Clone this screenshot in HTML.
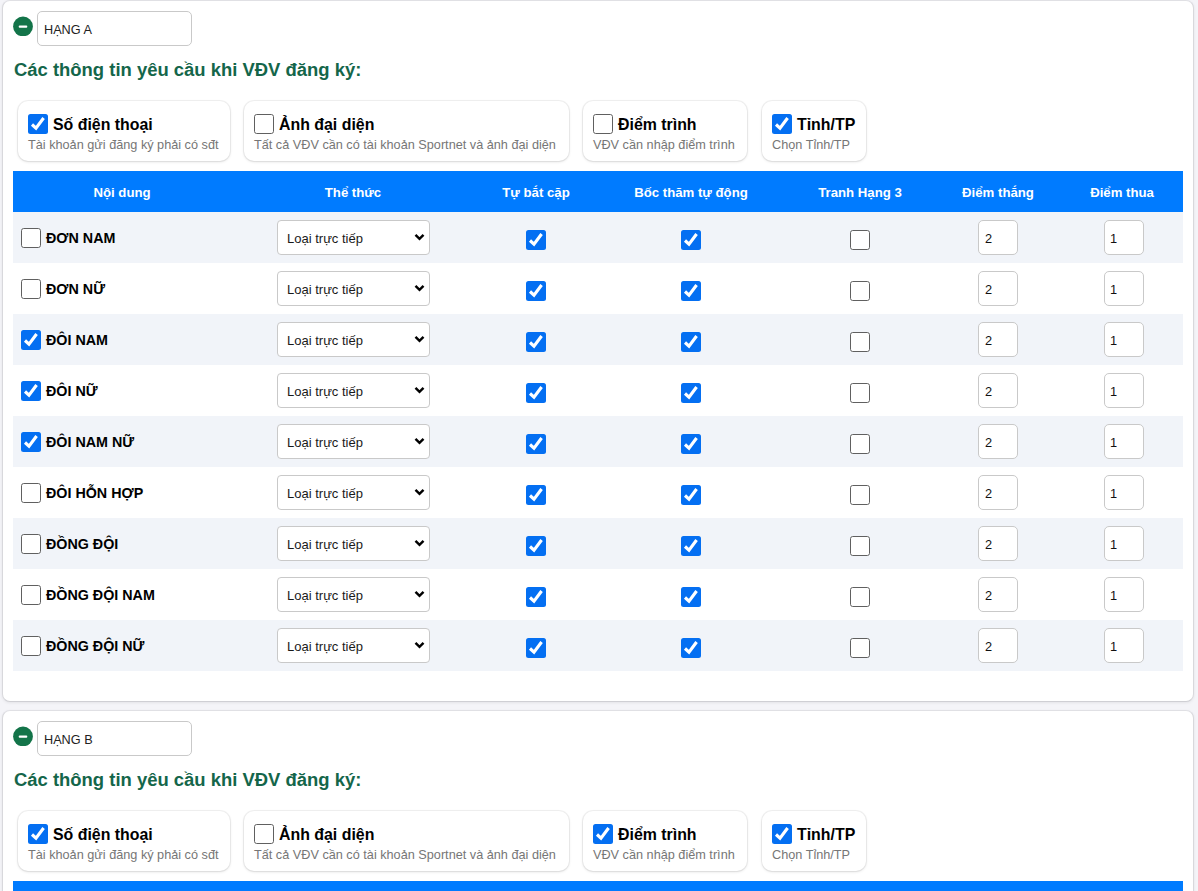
<!DOCTYPE html>
<html><head><meta charset="utf-8"><title>Hang</title><style>
*{box-sizing:border-box;margin:0;padding:0}
html,body{width:1198px;height:891px;overflow:hidden;background:#f4f4f8;font-family:"Liberation Sans", sans-serif}
.card{position:absolute;left:2px;width:1192px;background:#fff;border:1px solid #d8d8dc;border-top-color:#e0e0e4;border-bottom-color:#cfcfd4;border-radius:8px;box-shadow:0 1px 3px rgba(0,0,0,.07)}
.minus,.cb,.inp,.ocard,.thead,.th,.rowbg,.sel,.chev,.itxt,.head,.otitle,.osub,.rlabel,.stxt,.ntxt{position:absolute}
.cb{width:20px;height:20px}
.cb svg,.minus svg{display:block}
.inp,.sel{background:#fff;border:1px solid #c9c9c9;border-radius:5px}
.sel{border-radius:4px}
.itxt{color:#222;white-space:nowrap}
.head{color:#14664a;font-weight:bold;font-size:18.45px;line-height:30px;white-space:nowrap}
.ocard{background:#fff;border-radius:10px;box-shadow:0 0 0 1px rgba(0,0,0,.05),0 1px 3px rgba(0,0,0,.12)}
.otitle{font-weight:bold;font-size:15.9px;line-height:24px;color:#000;white-space:nowrap}
.osub{font-size:12.7px;line-height:18px;color:#767676;white-space:nowrap}
.thead{background:#007bff}
.th{height:41px;line-height:41px;text-align:center;color:#fff;font-weight:bold;font-size:13.2px;white-space:nowrap}
.rowbg{background:#f1f4f9}
.rlabel{font-weight:bold;font-size:14.3px;line-height:51px;color:#000;white-space:nowrap}
.stxt{font-size:13px;line-height:35px;color:#1a1a1a;white-space:nowrap}
.ntxt{font-size:12.8px;line-height:35px;color:#111;white-space:nowrap}
</style></head><body>
<div class="card" style="top:0px;height:702px"></div>
<div class="card" style="top:710px;height:400px"></div>
<div class="minus" style="left:13px;top:16px"><svg width="20" height="20" viewBox="0 0 20 20"><circle cx="10" cy="10.4" r="9.9" fill="#137449"/><rect x="5.7" y="9.4" width="8.6" height="2.4" rx="1" fill="#fff"/></svg></div>
<div class="inp" style="left:37px;top:11px;width:155px;height:35px"></div>
<div class="itxt" style="left:44px;top:13px;line-height:35px;font-size:12.7px">HẠNG A</div>
<div class="head" style="left:14px;top:55px;">Các thông tin yêu cầu khi VĐV đăng ký:</div>
<div class="ocard" style="left:18px;top:101px;width:212px;height:60px"></div>
<div class="cb" style="left:28px;top:114px"><svg width="20" height="20" viewBox="0 0 20 20"><rect x="0" y="0" width="20" height="20" rx="2.5" fill="#046ff2"/><path d="M4.0 10.5 L8.0 14.2 L15.6 4.0" fill="none" stroke="#fff" stroke-width="3.1" stroke-linecap="butt" stroke-linejoin="miter"/></svg></div>
<div class="otitle" style="left:53px;top:113px;">Số điện thoại</div>
<div class="osub" style="left:28px;top:136px;">Tài khoản gửi đăng ký phải có sđt</div>
<div class="ocard" style="left:244px;top:101px;width:325px;height:60px"></div>
<div class="cb" style="left:254px;top:114px"><svg width="20" height="20" viewBox="0 0 20 20"><rect x="0.5" y="0.5" width="19" height="19" rx="2.2" fill="#fff" stroke="#606060" stroke-width="1"/></svg></div>
<div class="otitle" style="left:279px;top:113px;">Ảnh đại diện</div>
<div class="osub" style="left:254px;top:136px;">Tất cả VĐV cần có tài khoản Sportnet và ảnh đại diện</div>
<div class="ocard" style="left:583px;top:101px;width:164px;height:60px"></div>
<div class="cb" style="left:593px;top:114px"><svg width="20" height="20" viewBox="0 0 20 20"><rect x="0.5" y="0.5" width="19" height="19" rx="2.2" fill="#fff" stroke="#606060" stroke-width="1"/></svg></div>
<div class="otitle" style="left:618px;top:113px;">Điểm trình</div>
<div class="osub" style="left:593px;top:136px;">VĐV cần nhập điểm trình</div>
<div class="ocard" style="left:762px;top:101px;width:104px;height:60px"></div>
<div class="cb" style="left:772px;top:114px"><svg width="20" height="20" viewBox="0 0 20 20"><rect x="0" y="0" width="20" height="20" rx="2.5" fill="#046ff2"/><path d="M4.0 10.5 L8.0 14.2 L15.6 4.0" fill="none" stroke="#fff" stroke-width="3.1" stroke-linecap="butt" stroke-linejoin="miter"/></svg></div>
<div class="otitle" style="left:797px;top:113px;">Tỉnh/TP</div>
<div class="osub" style="left:772px;top:136px;">Chọn Tỉnh/TP</div>
<div class="thead" style="left:13px;top:171px;width:1170px;height:41px"></div>
<div class="th" style="left:13px;top:172px;width:218px">Nội dung</div>
<div class="th" style="left:231px;top:172px;width:244px">Thể thức</div>
<div class="th" style="left:475px;top:172px;width:122px">Tự bắt cặp</div>
<div class="th" style="left:597px;top:172px;width:188px">Bốc thăm tự động</div>
<div class="th" style="left:785px;top:172px;width:150px">Tranh Hạng 3</div>
<div class="th" style="left:935px;top:172px;width:126px">Điểm thắng</div>
<div class="th" style="left:1061px;top:172px;width:122px">Điểm thua</div>
<div class="rowbg" style="left:13px;top:212px;width:1170px;height:51px"></div>
<div class="cb" style="left:21px;top:228px"><svg width="20" height="20" viewBox="0 0 20 20"><rect x="0.5" y="0.5" width="19" height="19" rx="2.2" fill="#fff" stroke="#606060" stroke-width="1"/></svg></div>
<div class="rlabel" style="left:46px;top:213px;">ĐƠN NAM</div>
<div class="sel" style="left:277px;top:220px;width:153px;height:35px"></div>
<div class="stxt" style="left:287px;top:221px;">Loại trực tiếp</div>
<svg class="chev" style="left:414px;top:233px" width="12" height="8" viewBox="0 0 12 8"><path d="M1.5 1.9 L5.5 5.8 L9.5 1.9" fill="none" stroke="#000" stroke-width="2.5"/></svg>
<div class="cb" style="left:526px;top:230px"><svg width="20" height="20" viewBox="0 0 20 20"><rect x="0" y="0" width="20" height="20" rx="2.5" fill="#046ff2"/><path d="M4.0 10.5 L8.0 14.2 L15.6 4.0" fill="none" stroke="#fff" stroke-width="3.1" stroke-linecap="butt" stroke-linejoin="miter"/></svg></div>
<div class="cb" style="left:681px;top:230px"><svg width="20" height="20" viewBox="0 0 20 20"><rect x="0" y="0" width="20" height="20" rx="2.5" fill="#046ff2"/><path d="M4.0 10.5 L8.0 14.2 L15.6 4.0" fill="none" stroke="#fff" stroke-width="3.1" stroke-linecap="butt" stroke-linejoin="miter"/></svg></div>
<div class="cb" style="left:850px;top:230px"><svg width="20" height="20" viewBox="0 0 20 20"><rect x="0.5" y="0.5" width="19" height="19" rx="2.2" fill="#fff" stroke="#606060" stroke-width="1"/></svg></div>
<div class="inp" style="left:978px;top:220px;width:40px;height:35px"></div>
<div class="ntxt" style="left:985px;top:221px;">2</div>
<div class="inp" style="left:1104px;top:220px;width:40px;height:35px"></div>
<div class="ntxt" style="left:1110px;top:221px;">1</div>
<div class="cb" style="left:21px;top:279px"><svg width="20" height="20" viewBox="0 0 20 20"><rect x="0.5" y="0.5" width="19" height="19" rx="2.2" fill="#fff" stroke="#606060" stroke-width="1"/></svg></div>
<div class="rlabel" style="left:46px;top:264px;">ĐƠN NỮ</div>
<div class="sel" style="left:277px;top:271px;width:153px;height:35px"></div>
<div class="stxt" style="left:287px;top:272px;">Loại trực tiếp</div>
<svg class="chev" style="left:414px;top:284px" width="12" height="8" viewBox="0 0 12 8"><path d="M1.5 1.9 L5.5 5.8 L9.5 1.9" fill="none" stroke="#000" stroke-width="2.5"/></svg>
<div class="cb" style="left:526px;top:281px"><svg width="20" height="20" viewBox="0 0 20 20"><rect x="0" y="0" width="20" height="20" rx="2.5" fill="#046ff2"/><path d="M4.0 10.5 L8.0 14.2 L15.6 4.0" fill="none" stroke="#fff" stroke-width="3.1" stroke-linecap="butt" stroke-linejoin="miter"/></svg></div>
<div class="cb" style="left:681px;top:281px"><svg width="20" height="20" viewBox="0 0 20 20"><rect x="0" y="0" width="20" height="20" rx="2.5" fill="#046ff2"/><path d="M4.0 10.5 L8.0 14.2 L15.6 4.0" fill="none" stroke="#fff" stroke-width="3.1" stroke-linecap="butt" stroke-linejoin="miter"/></svg></div>
<div class="cb" style="left:850px;top:281px"><svg width="20" height="20" viewBox="0 0 20 20"><rect x="0.5" y="0.5" width="19" height="19" rx="2.2" fill="#fff" stroke="#606060" stroke-width="1"/></svg></div>
<div class="inp" style="left:978px;top:271px;width:40px;height:35px"></div>
<div class="ntxt" style="left:985px;top:272px;">2</div>
<div class="inp" style="left:1104px;top:271px;width:40px;height:35px"></div>
<div class="ntxt" style="left:1110px;top:272px;">1</div>
<div class="rowbg" style="left:13px;top:314px;width:1170px;height:51px"></div>
<div class="cb" style="left:21px;top:330px"><svg width="20" height="20" viewBox="0 0 20 20"><rect x="0" y="0" width="20" height="20" rx="2.5" fill="#046ff2"/><path d="M4.0 10.5 L8.0 14.2 L15.6 4.0" fill="none" stroke="#fff" stroke-width="3.1" stroke-linecap="butt" stroke-linejoin="miter"/></svg></div>
<div class="rlabel" style="left:46px;top:315px;">ĐÔI NAM</div>
<div class="sel" style="left:277px;top:322px;width:153px;height:35px"></div>
<div class="stxt" style="left:287px;top:323px;">Loại trực tiếp</div>
<svg class="chev" style="left:414px;top:335px" width="12" height="8" viewBox="0 0 12 8"><path d="M1.5 1.9 L5.5 5.8 L9.5 1.9" fill="none" stroke="#000" stroke-width="2.5"/></svg>
<div class="cb" style="left:526px;top:332px"><svg width="20" height="20" viewBox="0 0 20 20"><rect x="0" y="0" width="20" height="20" rx="2.5" fill="#046ff2"/><path d="M4.0 10.5 L8.0 14.2 L15.6 4.0" fill="none" stroke="#fff" stroke-width="3.1" stroke-linecap="butt" stroke-linejoin="miter"/></svg></div>
<div class="cb" style="left:681px;top:332px"><svg width="20" height="20" viewBox="0 0 20 20"><rect x="0" y="0" width="20" height="20" rx="2.5" fill="#046ff2"/><path d="M4.0 10.5 L8.0 14.2 L15.6 4.0" fill="none" stroke="#fff" stroke-width="3.1" stroke-linecap="butt" stroke-linejoin="miter"/></svg></div>
<div class="cb" style="left:850px;top:332px"><svg width="20" height="20" viewBox="0 0 20 20"><rect x="0.5" y="0.5" width="19" height="19" rx="2.2" fill="#fff" stroke="#606060" stroke-width="1"/></svg></div>
<div class="inp" style="left:978px;top:322px;width:40px;height:35px"></div>
<div class="ntxt" style="left:985px;top:323px;">2</div>
<div class="inp" style="left:1104px;top:322px;width:40px;height:35px"></div>
<div class="ntxt" style="left:1110px;top:323px;">1</div>
<div class="cb" style="left:21px;top:381px"><svg width="20" height="20" viewBox="0 0 20 20"><rect x="0" y="0" width="20" height="20" rx="2.5" fill="#046ff2"/><path d="M4.0 10.5 L8.0 14.2 L15.6 4.0" fill="none" stroke="#fff" stroke-width="3.1" stroke-linecap="butt" stroke-linejoin="miter"/></svg></div>
<div class="rlabel" style="left:46px;top:366px;">ĐÔI NỮ</div>
<div class="sel" style="left:277px;top:373px;width:153px;height:35px"></div>
<div class="stxt" style="left:287px;top:374px;">Loại trực tiếp</div>
<svg class="chev" style="left:414px;top:386px" width="12" height="8" viewBox="0 0 12 8"><path d="M1.5 1.9 L5.5 5.8 L9.5 1.9" fill="none" stroke="#000" stroke-width="2.5"/></svg>
<div class="cb" style="left:526px;top:383px"><svg width="20" height="20" viewBox="0 0 20 20"><rect x="0" y="0" width="20" height="20" rx="2.5" fill="#046ff2"/><path d="M4.0 10.5 L8.0 14.2 L15.6 4.0" fill="none" stroke="#fff" stroke-width="3.1" stroke-linecap="butt" stroke-linejoin="miter"/></svg></div>
<div class="cb" style="left:681px;top:383px"><svg width="20" height="20" viewBox="0 0 20 20"><rect x="0" y="0" width="20" height="20" rx="2.5" fill="#046ff2"/><path d="M4.0 10.5 L8.0 14.2 L15.6 4.0" fill="none" stroke="#fff" stroke-width="3.1" stroke-linecap="butt" stroke-linejoin="miter"/></svg></div>
<div class="cb" style="left:850px;top:383px"><svg width="20" height="20" viewBox="0 0 20 20"><rect x="0.5" y="0.5" width="19" height="19" rx="2.2" fill="#fff" stroke="#606060" stroke-width="1"/></svg></div>
<div class="inp" style="left:978px;top:373px;width:40px;height:35px"></div>
<div class="ntxt" style="left:985px;top:374px;">2</div>
<div class="inp" style="left:1104px;top:373px;width:40px;height:35px"></div>
<div class="ntxt" style="left:1110px;top:374px;">1</div>
<div class="rowbg" style="left:13px;top:416px;width:1170px;height:51px"></div>
<div class="cb" style="left:21px;top:432px"><svg width="20" height="20" viewBox="0 0 20 20"><rect x="0" y="0" width="20" height="20" rx="2.5" fill="#046ff2"/><path d="M4.0 10.5 L8.0 14.2 L15.6 4.0" fill="none" stroke="#fff" stroke-width="3.1" stroke-linecap="butt" stroke-linejoin="miter"/></svg></div>
<div class="rlabel" style="left:46px;top:417px;">ĐÔI NAM NỮ</div>
<div class="sel" style="left:277px;top:424px;width:153px;height:35px"></div>
<div class="stxt" style="left:287px;top:425px;">Loại trực tiếp</div>
<svg class="chev" style="left:414px;top:437px" width="12" height="8" viewBox="0 0 12 8"><path d="M1.5 1.9 L5.5 5.8 L9.5 1.9" fill="none" stroke="#000" stroke-width="2.5"/></svg>
<div class="cb" style="left:526px;top:434px"><svg width="20" height="20" viewBox="0 0 20 20"><rect x="0" y="0" width="20" height="20" rx="2.5" fill="#046ff2"/><path d="M4.0 10.5 L8.0 14.2 L15.6 4.0" fill="none" stroke="#fff" stroke-width="3.1" stroke-linecap="butt" stroke-linejoin="miter"/></svg></div>
<div class="cb" style="left:681px;top:434px"><svg width="20" height="20" viewBox="0 0 20 20"><rect x="0" y="0" width="20" height="20" rx="2.5" fill="#046ff2"/><path d="M4.0 10.5 L8.0 14.2 L15.6 4.0" fill="none" stroke="#fff" stroke-width="3.1" stroke-linecap="butt" stroke-linejoin="miter"/></svg></div>
<div class="cb" style="left:850px;top:434px"><svg width="20" height="20" viewBox="0 0 20 20"><rect x="0.5" y="0.5" width="19" height="19" rx="2.2" fill="#fff" stroke="#606060" stroke-width="1"/></svg></div>
<div class="inp" style="left:978px;top:424px;width:40px;height:35px"></div>
<div class="ntxt" style="left:985px;top:425px;">2</div>
<div class="inp" style="left:1104px;top:424px;width:40px;height:35px"></div>
<div class="ntxt" style="left:1110px;top:425px;">1</div>
<div class="cb" style="left:21px;top:483px"><svg width="20" height="20" viewBox="0 0 20 20"><rect x="0.5" y="0.5" width="19" height="19" rx="2.2" fill="#fff" stroke="#606060" stroke-width="1"/></svg></div>
<div class="rlabel" style="left:46px;top:468px;">ĐÔI HỖN HỢP</div>
<div class="sel" style="left:277px;top:475px;width:153px;height:35px"></div>
<div class="stxt" style="left:287px;top:476px;">Loại trực tiếp</div>
<svg class="chev" style="left:414px;top:488px" width="12" height="8" viewBox="0 0 12 8"><path d="M1.5 1.9 L5.5 5.8 L9.5 1.9" fill="none" stroke="#000" stroke-width="2.5"/></svg>
<div class="cb" style="left:526px;top:485px"><svg width="20" height="20" viewBox="0 0 20 20"><rect x="0" y="0" width="20" height="20" rx="2.5" fill="#046ff2"/><path d="M4.0 10.5 L8.0 14.2 L15.6 4.0" fill="none" stroke="#fff" stroke-width="3.1" stroke-linecap="butt" stroke-linejoin="miter"/></svg></div>
<div class="cb" style="left:681px;top:485px"><svg width="20" height="20" viewBox="0 0 20 20"><rect x="0" y="0" width="20" height="20" rx="2.5" fill="#046ff2"/><path d="M4.0 10.5 L8.0 14.2 L15.6 4.0" fill="none" stroke="#fff" stroke-width="3.1" stroke-linecap="butt" stroke-linejoin="miter"/></svg></div>
<div class="cb" style="left:850px;top:485px"><svg width="20" height="20" viewBox="0 0 20 20"><rect x="0.5" y="0.5" width="19" height="19" rx="2.2" fill="#fff" stroke="#606060" stroke-width="1"/></svg></div>
<div class="inp" style="left:978px;top:475px;width:40px;height:35px"></div>
<div class="ntxt" style="left:985px;top:476px;">2</div>
<div class="inp" style="left:1104px;top:475px;width:40px;height:35px"></div>
<div class="ntxt" style="left:1110px;top:476px;">1</div>
<div class="rowbg" style="left:13px;top:518px;width:1170px;height:51px"></div>
<div class="cb" style="left:21px;top:534px"><svg width="20" height="20" viewBox="0 0 20 20"><rect x="0.5" y="0.5" width="19" height="19" rx="2.2" fill="#fff" stroke="#606060" stroke-width="1"/></svg></div>
<div class="rlabel" style="left:46px;top:519px;">ĐỒNG ĐỘI</div>
<div class="sel" style="left:277px;top:526px;width:153px;height:35px"></div>
<div class="stxt" style="left:287px;top:527px;">Loại trực tiếp</div>
<svg class="chev" style="left:414px;top:539px" width="12" height="8" viewBox="0 0 12 8"><path d="M1.5 1.9 L5.5 5.8 L9.5 1.9" fill="none" stroke="#000" stroke-width="2.5"/></svg>
<div class="cb" style="left:526px;top:536px"><svg width="20" height="20" viewBox="0 0 20 20"><rect x="0" y="0" width="20" height="20" rx="2.5" fill="#046ff2"/><path d="M4.0 10.5 L8.0 14.2 L15.6 4.0" fill="none" stroke="#fff" stroke-width="3.1" stroke-linecap="butt" stroke-linejoin="miter"/></svg></div>
<div class="cb" style="left:681px;top:536px"><svg width="20" height="20" viewBox="0 0 20 20"><rect x="0" y="0" width="20" height="20" rx="2.5" fill="#046ff2"/><path d="M4.0 10.5 L8.0 14.2 L15.6 4.0" fill="none" stroke="#fff" stroke-width="3.1" stroke-linecap="butt" stroke-linejoin="miter"/></svg></div>
<div class="cb" style="left:850px;top:536px"><svg width="20" height="20" viewBox="0 0 20 20"><rect x="0.5" y="0.5" width="19" height="19" rx="2.2" fill="#fff" stroke="#606060" stroke-width="1"/></svg></div>
<div class="inp" style="left:978px;top:526px;width:40px;height:35px"></div>
<div class="ntxt" style="left:985px;top:527px;">2</div>
<div class="inp" style="left:1104px;top:526px;width:40px;height:35px"></div>
<div class="ntxt" style="left:1110px;top:527px;">1</div>
<div class="cb" style="left:21px;top:585px"><svg width="20" height="20" viewBox="0 0 20 20"><rect x="0.5" y="0.5" width="19" height="19" rx="2.2" fill="#fff" stroke="#606060" stroke-width="1"/></svg></div>
<div class="rlabel" style="left:46px;top:570px;">ĐỒNG ĐỘI NAM</div>
<div class="sel" style="left:277px;top:577px;width:153px;height:35px"></div>
<div class="stxt" style="left:287px;top:578px;">Loại trực tiếp</div>
<svg class="chev" style="left:414px;top:590px" width="12" height="8" viewBox="0 0 12 8"><path d="M1.5 1.9 L5.5 5.8 L9.5 1.9" fill="none" stroke="#000" stroke-width="2.5"/></svg>
<div class="cb" style="left:526px;top:587px"><svg width="20" height="20" viewBox="0 0 20 20"><rect x="0" y="0" width="20" height="20" rx="2.5" fill="#046ff2"/><path d="M4.0 10.5 L8.0 14.2 L15.6 4.0" fill="none" stroke="#fff" stroke-width="3.1" stroke-linecap="butt" stroke-linejoin="miter"/></svg></div>
<div class="cb" style="left:681px;top:587px"><svg width="20" height="20" viewBox="0 0 20 20"><rect x="0" y="0" width="20" height="20" rx="2.5" fill="#046ff2"/><path d="M4.0 10.5 L8.0 14.2 L15.6 4.0" fill="none" stroke="#fff" stroke-width="3.1" stroke-linecap="butt" stroke-linejoin="miter"/></svg></div>
<div class="cb" style="left:850px;top:587px"><svg width="20" height="20" viewBox="0 0 20 20"><rect x="0.5" y="0.5" width="19" height="19" rx="2.2" fill="#fff" stroke="#606060" stroke-width="1"/></svg></div>
<div class="inp" style="left:978px;top:577px;width:40px;height:35px"></div>
<div class="ntxt" style="left:985px;top:578px;">2</div>
<div class="inp" style="left:1104px;top:577px;width:40px;height:35px"></div>
<div class="ntxt" style="left:1110px;top:578px;">1</div>
<div class="rowbg" style="left:13px;top:620px;width:1170px;height:51px"></div>
<div class="cb" style="left:21px;top:636px"><svg width="20" height="20" viewBox="0 0 20 20"><rect x="0.5" y="0.5" width="19" height="19" rx="2.2" fill="#fff" stroke="#606060" stroke-width="1"/></svg></div>
<div class="rlabel" style="left:46px;top:621px;">ĐỒNG ĐỘI NỮ</div>
<div class="sel" style="left:277px;top:628px;width:153px;height:35px"></div>
<div class="stxt" style="left:287px;top:629px;">Loại trực tiếp</div>
<svg class="chev" style="left:414px;top:641px" width="12" height="8" viewBox="0 0 12 8"><path d="M1.5 1.9 L5.5 5.8 L9.5 1.9" fill="none" stroke="#000" stroke-width="2.5"/></svg>
<div class="cb" style="left:526px;top:638px"><svg width="20" height="20" viewBox="0 0 20 20"><rect x="0" y="0" width="20" height="20" rx="2.5" fill="#046ff2"/><path d="M4.0 10.5 L8.0 14.2 L15.6 4.0" fill="none" stroke="#fff" stroke-width="3.1" stroke-linecap="butt" stroke-linejoin="miter"/></svg></div>
<div class="cb" style="left:681px;top:638px"><svg width="20" height="20" viewBox="0 0 20 20"><rect x="0" y="0" width="20" height="20" rx="2.5" fill="#046ff2"/><path d="M4.0 10.5 L8.0 14.2 L15.6 4.0" fill="none" stroke="#fff" stroke-width="3.1" stroke-linecap="butt" stroke-linejoin="miter"/></svg></div>
<div class="cb" style="left:850px;top:638px"><svg width="20" height="20" viewBox="0 0 20 20"><rect x="0.5" y="0.5" width="19" height="19" rx="2.2" fill="#fff" stroke="#606060" stroke-width="1"/></svg></div>
<div class="inp" style="left:978px;top:628px;width:40px;height:35px"></div>
<div class="ntxt" style="left:985px;top:629px;">2</div>
<div class="inp" style="left:1104px;top:628px;width:40px;height:35px"></div>
<div class="ntxt" style="left:1110px;top:629px;">1</div>
<div class="minus" style="left:13px;top:726px"><svg width="20" height="20" viewBox="0 0 20 20"><circle cx="10" cy="10.4" r="9.9" fill="#137449"/><rect x="5.7" y="9.4" width="8.6" height="2.4" rx="1" fill="#fff"/></svg></div>
<div class="inp" style="left:37px;top:721px;width:155px;height:35px"></div>
<div class="itxt" style="left:44px;top:723px;line-height:35px;font-size:12.7px">HẠNG B</div>
<div class="head" style="left:14px;top:765px;">Các thông tin yêu cầu khi VĐV đăng ký:</div>
<div class="ocard" style="left:18px;top:811px;width:212px;height:60px"></div>
<div class="cb" style="left:28px;top:824px"><svg width="20" height="20" viewBox="0 0 20 20"><rect x="0" y="0" width="20" height="20" rx="2.5" fill="#046ff2"/><path d="M4.0 10.5 L8.0 14.2 L15.6 4.0" fill="none" stroke="#fff" stroke-width="3.1" stroke-linecap="butt" stroke-linejoin="miter"/></svg></div>
<div class="otitle" style="left:53px;top:823px;">Số điện thoại</div>
<div class="osub" style="left:28px;top:846px;">Tài khoản gửi đăng ký phải có sđt</div>
<div class="ocard" style="left:244px;top:811px;width:325px;height:60px"></div>
<div class="cb" style="left:254px;top:824px"><svg width="20" height="20" viewBox="0 0 20 20"><rect x="0.5" y="0.5" width="19" height="19" rx="2.2" fill="#fff" stroke="#606060" stroke-width="1"/></svg></div>
<div class="otitle" style="left:279px;top:823px;">Ảnh đại diện</div>
<div class="osub" style="left:254px;top:846px;">Tất cả VĐV cần có tài khoản Sportnet và ảnh đại diện</div>
<div class="ocard" style="left:583px;top:811px;width:164px;height:60px"></div>
<div class="cb" style="left:593px;top:824px"><svg width="20" height="20" viewBox="0 0 20 20"><rect x="0" y="0" width="20" height="20" rx="2.5" fill="#046ff2"/><path d="M4.0 10.5 L8.0 14.2 L15.6 4.0" fill="none" stroke="#fff" stroke-width="3.1" stroke-linecap="butt" stroke-linejoin="miter"/></svg></div>
<div class="otitle" style="left:618px;top:823px;">Điểm trình</div>
<div class="osub" style="left:593px;top:846px;">VĐV cần nhập điểm trình</div>
<div class="ocard" style="left:762px;top:811px;width:104px;height:60px"></div>
<div class="cb" style="left:772px;top:824px"><svg width="20" height="20" viewBox="0 0 20 20"><rect x="0" y="0" width="20" height="20" rx="2.5" fill="#046ff2"/><path d="M4.0 10.5 L8.0 14.2 L15.6 4.0" fill="none" stroke="#fff" stroke-width="3.1" stroke-linecap="butt" stroke-linejoin="miter"/></svg></div>
<div class="otitle" style="left:797px;top:823px;">Tỉnh/TP</div>
<div class="osub" style="left:772px;top:846px;">Chọn Tỉnh/TP</div>
<div class="thead" style="left:13px;top:881px;width:1170px;height:41px"></div>
<div class="th" style="left:13px;top:882px;width:218px">Nội dung</div>
<div class="th" style="left:231px;top:882px;width:244px">Thể thức</div>
<div class="th" style="left:475px;top:882px;width:122px">Tự bắt cặp</div>
<div class="th" style="left:597px;top:882px;width:188px">Bốc thăm tự động</div>
<div class="th" style="left:785px;top:882px;width:150px">Tranh Hạng 3</div>
<div class="th" style="left:935px;top:882px;width:126px">Điểm thắng</div>
<div class="th" style="left:1061px;top:882px;width:122px">Điểm thua</div>
<div class="rowbg" style="left:13px;top:922px;width:1170px;height:51px"></div>
<div class="cb" style="left:21px;top:938px"><svg width="20" height="20" viewBox="0 0 20 20"><rect x="0.5" y="0.5" width="19" height="19" rx="2.2" fill="#fff" stroke="#606060" stroke-width="1"/></svg></div>
<div class="rlabel" style="left:46px;top:923px;">ĐƠN NAM</div>
<div class="sel" style="left:277px;top:930px;width:153px;height:35px"></div>
<div class="stxt" style="left:287px;top:931px;">Loại trực tiếp</div>
<svg class="chev" style="left:414px;top:943px" width="12" height="8" viewBox="0 0 12 8"><path d="M1.5 1.9 L5.5 5.8 L9.5 1.9" fill="none" stroke="#000" stroke-width="2.5"/></svg>
<div class="cb" style="left:526px;top:940px"><svg width="20" height="20" viewBox="0 0 20 20"><rect x="0" y="0" width="20" height="20" rx="2.5" fill="#046ff2"/><path d="M4.0 10.5 L8.0 14.2 L15.6 4.0" fill="none" stroke="#fff" stroke-width="3.1" stroke-linecap="butt" stroke-linejoin="miter"/></svg></div>
<div class="cb" style="left:681px;top:940px"><svg width="20" height="20" viewBox="0 0 20 20"><rect x="0" y="0" width="20" height="20" rx="2.5" fill="#046ff2"/><path d="M4.0 10.5 L8.0 14.2 L15.6 4.0" fill="none" stroke="#fff" stroke-width="3.1" stroke-linecap="butt" stroke-linejoin="miter"/></svg></div>
<div class="cb" style="left:850px;top:940px"><svg width="20" height="20" viewBox="0 0 20 20"><rect x="0.5" y="0.5" width="19" height="19" rx="2.2" fill="#fff" stroke="#606060" stroke-width="1"/></svg></div>
<div class="inp" style="left:978px;top:930px;width:40px;height:35px"></div>
<div class="ntxt" style="left:985px;top:931px;">2</div>
<div class="inp" style="left:1104px;top:930px;width:40px;height:35px"></div>
<div class="ntxt" style="left:1110px;top:931px;">1</div>
<div class="cb" style="left:21px;top:989px"><svg width="20" height="20" viewBox="0 0 20 20"><rect x="0.5" y="0.5" width="19" height="19" rx="2.2" fill="#fff" stroke="#606060" stroke-width="1"/></svg></div>
<div class="rlabel" style="left:46px;top:974px;">ĐƠN NỮ</div>
<div class="sel" style="left:277px;top:981px;width:153px;height:35px"></div>
<div class="stxt" style="left:287px;top:982px;">Loại trực tiếp</div>
<svg class="chev" style="left:414px;top:994px" width="12" height="8" viewBox="0 0 12 8"><path d="M1.5 1.9 L5.5 5.8 L9.5 1.9" fill="none" stroke="#000" stroke-width="2.5"/></svg>
<div class="cb" style="left:526px;top:991px"><svg width="20" height="20" viewBox="0 0 20 20"><rect x="0" y="0" width="20" height="20" rx="2.5" fill="#046ff2"/><path d="M4.0 10.5 L8.0 14.2 L15.6 4.0" fill="none" stroke="#fff" stroke-width="3.1" stroke-linecap="butt" stroke-linejoin="miter"/></svg></div>
<div class="cb" style="left:681px;top:991px"><svg width="20" height="20" viewBox="0 0 20 20"><rect x="0" y="0" width="20" height="20" rx="2.5" fill="#046ff2"/><path d="M4.0 10.5 L8.0 14.2 L15.6 4.0" fill="none" stroke="#fff" stroke-width="3.1" stroke-linecap="butt" stroke-linejoin="miter"/></svg></div>
<div class="cb" style="left:850px;top:991px"><svg width="20" height="20" viewBox="0 0 20 20"><rect x="0.5" y="0.5" width="19" height="19" rx="2.2" fill="#fff" stroke="#606060" stroke-width="1"/></svg></div>
<div class="inp" style="left:978px;top:981px;width:40px;height:35px"></div>
<div class="ntxt" style="left:985px;top:982px;">2</div>
<div class="inp" style="left:1104px;top:981px;width:40px;height:35px"></div>
<div class="ntxt" style="left:1110px;top:982px;">1</div>
<div class="rowbg" style="left:13px;top:1024px;width:1170px;height:51px"></div>
<div class="cb" style="left:21px;top:1040px"><svg width="20" height="20" viewBox="0 0 20 20"><rect x="0" y="0" width="20" height="20" rx="2.5" fill="#046ff2"/><path d="M4.0 10.5 L8.0 14.2 L15.6 4.0" fill="none" stroke="#fff" stroke-width="3.1" stroke-linecap="butt" stroke-linejoin="miter"/></svg></div>
<div class="rlabel" style="left:46px;top:1025px;">ĐÔI NAM</div>
<div class="sel" style="left:277px;top:1032px;width:153px;height:35px"></div>
<div class="stxt" style="left:287px;top:1033px;">Loại trực tiếp</div>
<svg class="chev" style="left:414px;top:1045px" width="12" height="8" viewBox="0 0 12 8"><path d="M1.5 1.9 L5.5 5.8 L9.5 1.9" fill="none" stroke="#000" stroke-width="2.5"/></svg>
<div class="cb" style="left:526px;top:1042px"><svg width="20" height="20" viewBox="0 0 20 20"><rect x="0" y="0" width="20" height="20" rx="2.5" fill="#046ff2"/><path d="M4.0 10.5 L8.0 14.2 L15.6 4.0" fill="none" stroke="#fff" stroke-width="3.1" stroke-linecap="butt" stroke-linejoin="miter"/></svg></div>
<div class="cb" style="left:681px;top:1042px"><svg width="20" height="20" viewBox="0 0 20 20"><rect x="0" y="0" width="20" height="20" rx="2.5" fill="#046ff2"/><path d="M4.0 10.5 L8.0 14.2 L15.6 4.0" fill="none" stroke="#fff" stroke-width="3.1" stroke-linecap="butt" stroke-linejoin="miter"/></svg></div>
<div class="cb" style="left:850px;top:1042px"><svg width="20" height="20" viewBox="0 0 20 20"><rect x="0.5" y="0.5" width="19" height="19" rx="2.2" fill="#fff" stroke="#606060" stroke-width="1"/></svg></div>
<div class="inp" style="left:978px;top:1032px;width:40px;height:35px"></div>
<div class="ntxt" style="left:985px;top:1033px;">2</div>
<div class="inp" style="left:1104px;top:1032px;width:40px;height:35px"></div>
<div class="ntxt" style="left:1110px;top:1033px;">1</div>
<div class="cb" style="left:21px;top:1091px"><svg width="20" height="20" viewBox="0 0 20 20"><rect x="0" y="0" width="20" height="20" rx="2.5" fill="#046ff2"/><path d="M4.0 10.5 L8.0 14.2 L15.6 4.0" fill="none" stroke="#fff" stroke-width="3.1" stroke-linecap="butt" stroke-linejoin="miter"/></svg></div>
<div class="rlabel" style="left:46px;top:1076px;">ĐÔI NỮ</div>
<div class="sel" style="left:277px;top:1083px;width:153px;height:35px"></div>
<div class="stxt" style="left:287px;top:1084px;">Loại trực tiếp</div>
<svg class="chev" style="left:414px;top:1096px" width="12" height="8" viewBox="0 0 12 8"><path d="M1.5 1.9 L5.5 5.8 L9.5 1.9" fill="none" stroke="#000" stroke-width="2.5"/></svg>
<div class="cb" style="left:526px;top:1093px"><svg width="20" height="20" viewBox="0 0 20 20"><rect x="0" y="0" width="20" height="20" rx="2.5" fill="#046ff2"/><path d="M4.0 10.5 L8.0 14.2 L15.6 4.0" fill="none" stroke="#fff" stroke-width="3.1" stroke-linecap="butt" stroke-linejoin="miter"/></svg></div>
<div class="cb" style="left:681px;top:1093px"><svg width="20" height="20" viewBox="0 0 20 20"><rect x="0" y="0" width="20" height="20" rx="2.5" fill="#046ff2"/><path d="M4.0 10.5 L8.0 14.2 L15.6 4.0" fill="none" stroke="#fff" stroke-width="3.1" stroke-linecap="butt" stroke-linejoin="miter"/></svg></div>
<div class="cb" style="left:850px;top:1093px"><svg width="20" height="20" viewBox="0 0 20 20"><rect x="0.5" y="0.5" width="19" height="19" rx="2.2" fill="#fff" stroke="#606060" stroke-width="1"/></svg></div>
<div class="inp" style="left:978px;top:1083px;width:40px;height:35px"></div>
<div class="ntxt" style="left:985px;top:1084px;">2</div>
<div class="inp" style="left:1104px;top:1083px;width:40px;height:35px"></div>
<div class="ntxt" style="left:1110px;top:1084px;">1</div>
<div class="rowbg" style="left:13px;top:1126px;width:1170px;height:51px"></div>
<div class="cb" style="left:21px;top:1142px"><svg width="20" height="20" viewBox="0 0 20 20"><rect x="0" y="0" width="20" height="20" rx="2.5" fill="#046ff2"/><path d="M4.0 10.5 L8.0 14.2 L15.6 4.0" fill="none" stroke="#fff" stroke-width="3.1" stroke-linecap="butt" stroke-linejoin="miter"/></svg></div>
<div class="rlabel" style="left:46px;top:1127px;">ĐÔI NAM NỮ</div>
<div class="sel" style="left:277px;top:1134px;width:153px;height:35px"></div>
<div class="stxt" style="left:287px;top:1135px;">Loại trực tiếp</div>
<svg class="chev" style="left:414px;top:1147px" width="12" height="8" viewBox="0 0 12 8"><path d="M1.5 1.9 L5.5 5.8 L9.5 1.9" fill="none" stroke="#000" stroke-width="2.5"/></svg>
<div class="cb" style="left:526px;top:1144px"><svg width="20" height="20" viewBox="0 0 20 20"><rect x="0" y="0" width="20" height="20" rx="2.5" fill="#046ff2"/><path d="M4.0 10.5 L8.0 14.2 L15.6 4.0" fill="none" stroke="#fff" stroke-width="3.1" stroke-linecap="butt" stroke-linejoin="miter"/></svg></div>
<div class="cb" style="left:681px;top:1144px"><svg width="20" height="20" viewBox="0 0 20 20"><rect x="0" y="0" width="20" height="20" rx="2.5" fill="#046ff2"/><path d="M4.0 10.5 L8.0 14.2 L15.6 4.0" fill="none" stroke="#fff" stroke-width="3.1" stroke-linecap="butt" stroke-linejoin="miter"/></svg></div>
<div class="cb" style="left:850px;top:1144px"><svg width="20" height="20" viewBox="0 0 20 20"><rect x="0.5" y="0.5" width="19" height="19" rx="2.2" fill="#fff" stroke="#606060" stroke-width="1"/></svg></div>
<div class="inp" style="left:978px;top:1134px;width:40px;height:35px"></div>
<div class="ntxt" style="left:985px;top:1135px;">2</div>
<div class="inp" style="left:1104px;top:1134px;width:40px;height:35px"></div>
<div class="ntxt" style="left:1110px;top:1135px;">1</div>
<div class="cb" style="left:21px;top:1193px"><svg width="20" height="20" viewBox="0 0 20 20"><rect x="0.5" y="0.5" width="19" height="19" rx="2.2" fill="#fff" stroke="#606060" stroke-width="1"/></svg></div>
<div class="rlabel" style="left:46px;top:1178px;">ĐÔI HỖN HỢP</div>
<div class="sel" style="left:277px;top:1185px;width:153px;height:35px"></div>
<div class="stxt" style="left:287px;top:1186px;">Loại trực tiếp</div>
<svg class="chev" style="left:414px;top:1198px" width="12" height="8" viewBox="0 0 12 8"><path d="M1.5 1.9 L5.5 5.8 L9.5 1.9" fill="none" stroke="#000" stroke-width="2.5"/></svg>
<div class="cb" style="left:526px;top:1195px"><svg width="20" height="20" viewBox="0 0 20 20"><rect x="0" y="0" width="20" height="20" rx="2.5" fill="#046ff2"/><path d="M4.0 10.5 L8.0 14.2 L15.6 4.0" fill="none" stroke="#fff" stroke-width="3.1" stroke-linecap="butt" stroke-linejoin="miter"/></svg></div>
<div class="cb" style="left:681px;top:1195px"><svg width="20" height="20" viewBox="0 0 20 20"><rect x="0" y="0" width="20" height="20" rx="2.5" fill="#046ff2"/><path d="M4.0 10.5 L8.0 14.2 L15.6 4.0" fill="none" stroke="#fff" stroke-width="3.1" stroke-linecap="butt" stroke-linejoin="miter"/></svg></div>
<div class="cb" style="left:850px;top:1195px"><svg width="20" height="20" viewBox="0 0 20 20"><rect x="0.5" y="0.5" width="19" height="19" rx="2.2" fill="#fff" stroke="#606060" stroke-width="1"/></svg></div>
<div class="inp" style="left:978px;top:1185px;width:40px;height:35px"></div>
<div class="ntxt" style="left:985px;top:1186px;">2</div>
<div class="inp" style="left:1104px;top:1185px;width:40px;height:35px"></div>
<div class="ntxt" style="left:1110px;top:1186px;">1</div>
<div class="rowbg" style="left:13px;top:1228px;width:1170px;height:51px"></div>
<div class="cb" style="left:21px;top:1244px"><svg width="20" height="20" viewBox="0 0 20 20"><rect x="0.5" y="0.5" width="19" height="19" rx="2.2" fill="#fff" stroke="#606060" stroke-width="1"/></svg></div>
<div class="rlabel" style="left:46px;top:1229px;">ĐỒNG ĐỘI</div>
<div class="sel" style="left:277px;top:1236px;width:153px;height:35px"></div>
<div class="stxt" style="left:287px;top:1237px;">Loại trực tiếp</div>
<svg class="chev" style="left:414px;top:1249px" width="12" height="8" viewBox="0 0 12 8"><path d="M1.5 1.9 L5.5 5.8 L9.5 1.9" fill="none" stroke="#000" stroke-width="2.5"/></svg>
<div class="cb" style="left:526px;top:1246px"><svg width="20" height="20" viewBox="0 0 20 20"><rect x="0" y="0" width="20" height="20" rx="2.5" fill="#046ff2"/><path d="M4.0 10.5 L8.0 14.2 L15.6 4.0" fill="none" stroke="#fff" stroke-width="3.1" stroke-linecap="butt" stroke-linejoin="miter"/></svg></div>
<div class="cb" style="left:681px;top:1246px"><svg width="20" height="20" viewBox="0 0 20 20"><rect x="0" y="0" width="20" height="20" rx="2.5" fill="#046ff2"/><path d="M4.0 10.5 L8.0 14.2 L15.6 4.0" fill="none" stroke="#fff" stroke-width="3.1" stroke-linecap="butt" stroke-linejoin="miter"/></svg></div>
<div class="cb" style="left:850px;top:1246px"><svg width="20" height="20" viewBox="0 0 20 20"><rect x="0.5" y="0.5" width="19" height="19" rx="2.2" fill="#fff" stroke="#606060" stroke-width="1"/></svg></div>
<div class="inp" style="left:978px;top:1236px;width:40px;height:35px"></div>
<div class="ntxt" style="left:985px;top:1237px;">2</div>
<div class="inp" style="left:1104px;top:1236px;width:40px;height:35px"></div>
<div class="ntxt" style="left:1110px;top:1237px;">1</div>
<div class="cb" style="left:21px;top:1295px"><svg width="20" height="20" viewBox="0 0 20 20"><rect x="0.5" y="0.5" width="19" height="19" rx="2.2" fill="#fff" stroke="#606060" stroke-width="1"/></svg></div>
<div class="rlabel" style="left:46px;top:1280px;">ĐỒNG ĐỘI NAM</div>
<div class="sel" style="left:277px;top:1287px;width:153px;height:35px"></div>
<div class="stxt" style="left:287px;top:1288px;">Loại trực tiếp</div>
<svg class="chev" style="left:414px;top:1300px" width="12" height="8" viewBox="0 0 12 8"><path d="M1.5 1.9 L5.5 5.8 L9.5 1.9" fill="none" stroke="#000" stroke-width="2.5"/></svg>
<div class="cb" style="left:526px;top:1297px"><svg width="20" height="20" viewBox="0 0 20 20"><rect x="0" y="0" width="20" height="20" rx="2.5" fill="#046ff2"/><path d="M4.0 10.5 L8.0 14.2 L15.6 4.0" fill="none" stroke="#fff" stroke-width="3.1" stroke-linecap="butt" stroke-linejoin="miter"/></svg></div>
<div class="cb" style="left:681px;top:1297px"><svg width="20" height="20" viewBox="0 0 20 20"><rect x="0" y="0" width="20" height="20" rx="2.5" fill="#046ff2"/><path d="M4.0 10.5 L8.0 14.2 L15.6 4.0" fill="none" stroke="#fff" stroke-width="3.1" stroke-linecap="butt" stroke-linejoin="miter"/></svg></div>
<div class="cb" style="left:850px;top:1297px"><svg width="20" height="20" viewBox="0 0 20 20"><rect x="0.5" y="0.5" width="19" height="19" rx="2.2" fill="#fff" stroke="#606060" stroke-width="1"/></svg></div>
<div class="inp" style="left:978px;top:1287px;width:40px;height:35px"></div>
<div class="ntxt" style="left:985px;top:1288px;">2</div>
<div class="inp" style="left:1104px;top:1287px;width:40px;height:35px"></div>
<div class="ntxt" style="left:1110px;top:1288px;">1</div>
<div class="rowbg" style="left:13px;top:1330px;width:1170px;height:51px"></div>
<div class="cb" style="left:21px;top:1346px"><svg width="20" height="20" viewBox="0 0 20 20"><rect x="0.5" y="0.5" width="19" height="19" rx="2.2" fill="#fff" stroke="#606060" stroke-width="1"/></svg></div>
<div class="rlabel" style="left:46px;top:1331px;">ĐỒNG ĐỘI NỮ</div>
<div class="sel" style="left:277px;top:1338px;width:153px;height:35px"></div>
<div class="stxt" style="left:287px;top:1339px;">Loại trực tiếp</div>
<svg class="chev" style="left:414px;top:1351px" width="12" height="8" viewBox="0 0 12 8"><path d="M1.5 1.9 L5.5 5.8 L9.5 1.9" fill="none" stroke="#000" stroke-width="2.5"/></svg>
<div class="cb" style="left:526px;top:1348px"><svg width="20" height="20" viewBox="0 0 20 20"><rect x="0" y="0" width="20" height="20" rx="2.5" fill="#046ff2"/><path d="M4.0 10.5 L8.0 14.2 L15.6 4.0" fill="none" stroke="#fff" stroke-width="3.1" stroke-linecap="butt" stroke-linejoin="miter"/></svg></div>
<div class="cb" style="left:681px;top:1348px"><svg width="20" height="20" viewBox="0 0 20 20"><rect x="0" y="0" width="20" height="20" rx="2.5" fill="#046ff2"/><path d="M4.0 10.5 L8.0 14.2 L15.6 4.0" fill="none" stroke="#fff" stroke-width="3.1" stroke-linecap="butt" stroke-linejoin="miter"/></svg></div>
<div class="cb" style="left:850px;top:1348px"><svg width="20" height="20" viewBox="0 0 20 20"><rect x="0.5" y="0.5" width="19" height="19" rx="2.2" fill="#fff" stroke="#606060" stroke-width="1"/></svg></div>
<div class="inp" style="left:978px;top:1338px;width:40px;height:35px"></div>
<div class="ntxt" style="left:985px;top:1339px;">2</div>
<div class="inp" style="left:1104px;top:1338px;width:40px;height:35px"></div>
<div class="ntxt" style="left:1110px;top:1339px;">1</div>
</body></html>
